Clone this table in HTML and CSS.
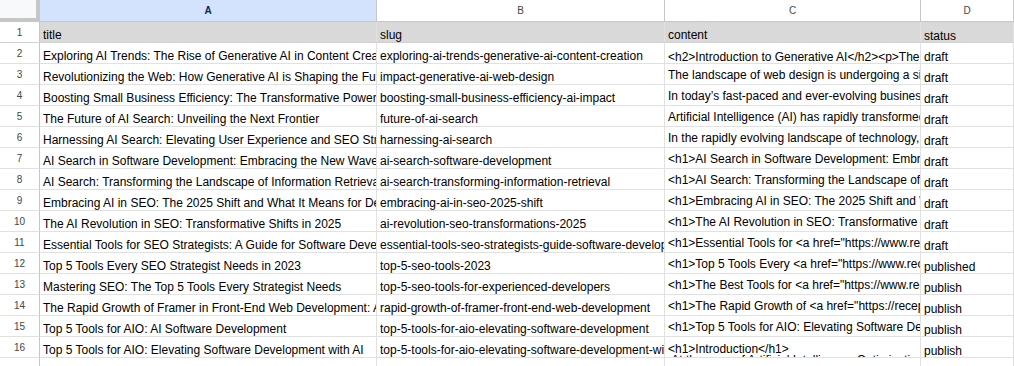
FILE: index.html
```html
<!DOCTYPE html>
<html lang="en">
<head>
    <meta charset="UTF-8">
    <meta name="viewport" content="width=device-width, initial-scale=1.0">
    <title>Posts sheet</title>
    <link rel="stylesheet" href="styles.css">
</head>
<body>
    <div class="sheet">
        <!-- column letters -->
        <div class="row head">
            <div class="corner"></div>
            <div class="col selected">A</div>
            <div class="col">B</div>
            <div class="col">C</div>
            <div class="col">D</div>
        </div>

        <div class="row first">
            <div class="num">1</div>
            <div class="cell">title</div>
            <div class="cell">slug</div>
            <div class="cell">content</div>
            <div class="cell status">status</div>
        </div>

        <div class="row">
            <div class="num">2</div>
            <div class="cell">Exploring AI Trends: The Rise of Generative AI in Content Creation</div>
            <div class="cell">exploring-ai-trends-generative-ai-content-creation</div>
            <div class="cell status">&lt;h2&gt;Introduction to Generative AI&lt;/h2&gt;&lt;p&gt;The landscape of content creation</div>
            <div class="cell status">draft</div>
        </div>

        <div class="row">
            <div class="num">3</div>
            <div class="cell">Revolutionizing the Web: How Generative AI is Shaping the Future of Design</div>
            <div class="cell">impact-generative-ai-web-design</div>
            <div class="cell multi">The landscape of web design is undergoing a significant change</div>
            <div class="cell status">draft</div>
        </div>

        <div class="row">
            <div class="num">4</div>
            <div class="cell">Boosting Small Business Efficiency: The Transformative Power of AI</div>
            <div class="cell">boosting-small-business-efficiency-ai-impact</div>
            <div class="cell multi">In today’s fast-paced and ever-evolving business world</div>
            <div class="cell status">draft</div>
        </div>

        <div class="row">
            <div class="num">5</div>
            <div class="cell">The Future of AI Search: Unveiling the Next Frontier</div>
            <div class="cell">future-of-ai-search</div>
            <div class="cell multi">Artificial Intelligence (AI) has rapidly transformed</div>
            <div class="cell status">draft</div>
        </div>

        <div class="row">
            <div class="num">6</div>
            <div class="cell">Harnessing AI Search: Elevating User Experience and SEO Strategies</div>
            <div class="cell">harnessing-ai-search</div>
            <div class="cell multi">In the rapidly evolving landscape of technology, search</div>
            <div class="cell status">draft</div>
        </div>

        <div class="row">
            <div class="num">7</div>
            <div class="cell">AI Search in Software Development: Embracing the New Wave</div>
            <div class="cell">ai-search-software-development</div>
            <div class="cell multi">&lt;h1&gt;AI Search in Software Development: Embracing</div>
            <div class="cell status">draft</div>
        </div>

        <div class="row">
            <div class="num">8</div>
            <div class="cell">AI Search: Transforming the Landscape of Information Retrieval</div>
            <div class="cell">ai-search-transforming-information-retrieval</div>
            <div class="cell multi">&lt;h1&gt;AI Search: Transforming the Landscape of Information</div>
            <div class="cell status">draft</div>
        </div>

        <div class="row">
            <div class="num">9</div>
            <div class="cell">Embracing AI in SEO: The 2025 Shift and What It Means for Developers</div>
            <div class="cell">embracing-ai-in-seo-2025-shift</div>
            <div class="cell multi">&lt;h1&gt;Embracing AI in SEO: The 2025 Shift and What</div>
            <div class="cell status">draft</div>
        </div>

        <div class="row">
            <div class="num">10</div>
            <div class="cell">The AI Revolution in SEO: Transformative Shifts in 2025</div>
            <div class="cell">ai-revolution-seo-transformations-2025</div>
            <div class="cell multi">&lt;h1&gt;The AI Revolution in SEO: Transformative Shifts</div>
            <div class="cell status">draft</div>
        </div>

        <div class="row">
            <div class="num">11</div>
            <div class="cell">Essential Tools for SEO Strategists: A Guide for Software Developers</div>
            <div class="cell">essential-tools-seo-strategists-guide-software-developers</div>
            <div class="cell multi">&lt;h1&gt;Essential Tools for &lt;a href="https://www.receptive.io"</div>
            <div class="cell status">draft</div>
        </div>

        <div class="row">
            <div class="num">12</div>
            <div class="cell">Top 5 Tools Every SEO Strategist Needs in 2023</div>
            <div class="cell">top-5-seo-tools-2023</div>
            <div class="cell multi">&lt;h1&gt;Top 5 Tools Every &lt;a href="https://www.receptive.io"</div>
            <div class="cell status">published</div>
        </div>

        <div class="row">
            <div class="num">13</div>
            <div class="cell">Mastering SEO: The Top 5 Tools Every Strategist Needs</div>
            <div class="cell">top-5-seo-tools-for-experienced-developers</div>
            <div class="cell multi">&lt;h1&gt;The Best Tools for &lt;a href="https://www.receptive.io"</div>
            <div class="cell status">publish</div>
        </div>

        <div class="row">
            <div class="num">14</div>
            <div class="cell">The Rapid Growth of Framer in Front-End Web Development: A Guide</div>
            <div class="cell">rapid-growth-of-framer-front-end-web-development</div>
            <div class="cell multi">&lt;h1&gt;The Rapid Growth of &lt;a href="https://receptive.io"</div>
            <div class="cell status">publish</div>
        </div>

        <div class="row">
            <div class="num">15</div>
            <div class="cell">Top 5 Tools for AIO: AI Software Development</div>
            <div class="cell">top-5-tools-for-aio-elevating-software-development</div>
            <div class="cell multi">&lt;h1&gt;Top 5 Tools for AIO: Elevating Software Development</div>
            <div class="cell status">publish</div>
        </div>

        <div class="row">
            <div class="num">16</div>
            <div class="cell">Top 5 Tools for AIO: Elevating Software Development with AI</div>
            <div class="cell">top-5-tools-for-aio-elevating-software-development-with-ai</div>
            <div class="cell multi intro">&lt;h1&gt;Introduction&lt;/h1&gt;<br>&nbsp;At the cusp of Artificial Intelligence Optimization</div>
            <div class="cell status">publish</div>
        </div>

        <div class="row">
            <div class="num"></div>
            <div class="cell"></div>
            <div class="cell"></div>
            <div class="cell"></div>
            <div class="cell"></div>
        </div>
    </div>
</body>
</html>
```

FILE: styles.css
```css
body {
    margin: 0;
    background: #fff;
    font-family: "Liberation Sans", Arial, sans-serif;
    color: #000;
    overflow: hidden;
}
.sheet {
    width: 1014px;
}
.row {
    display: grid;
    grid-template-columns: 40px 337px 288px 256px 93px;
}
.row > div {
    box-sizing: border-box;
    height: 21px;
    border-right: 1px solid #e1e1e1;
    border-bottom: 1px solid #e1e1e1;
    overflow: hidden;
    white-space: nowrap;
}

/* column letters */
.head > div {
    height: 22px;
    border-right-color: #c7c7c7;
    border-bottom-color: #c4c7c5;
}
.corner {
    background: #f8f9fa;
    box-shadow: inset -3px -3px 0 #c4c7c5;
}
.col {
    font-size: 10px;
    line-height: 21px;
    text-align: center;
    color: #444746;
}
.col.selected {
    background: #d3e3fd;
    color: #0b2a5c;
    font-weight: bold;
}

/* row numbers */
.num {
    font-size: 10px;
    line-height: 21px;
    text-align: center;
    color: #444746;
    border-right-color: #c4c7c5 !important;
}

.cell {
    font-size: 12px;
    line-height: 14px;
    padding: 6px 0 0 3px;
}
.cell.status {
    padding-top: 7px;
}
.cell.multi {
    line-height: 11px;
    padding-top: 6px;
}
.cell.intro {
    padding-top: 7px;
}

.first .cell {
    background: #d9d9d9;
}
.first > div {
    border-bottom-color: #d0d0d0;
}
```
